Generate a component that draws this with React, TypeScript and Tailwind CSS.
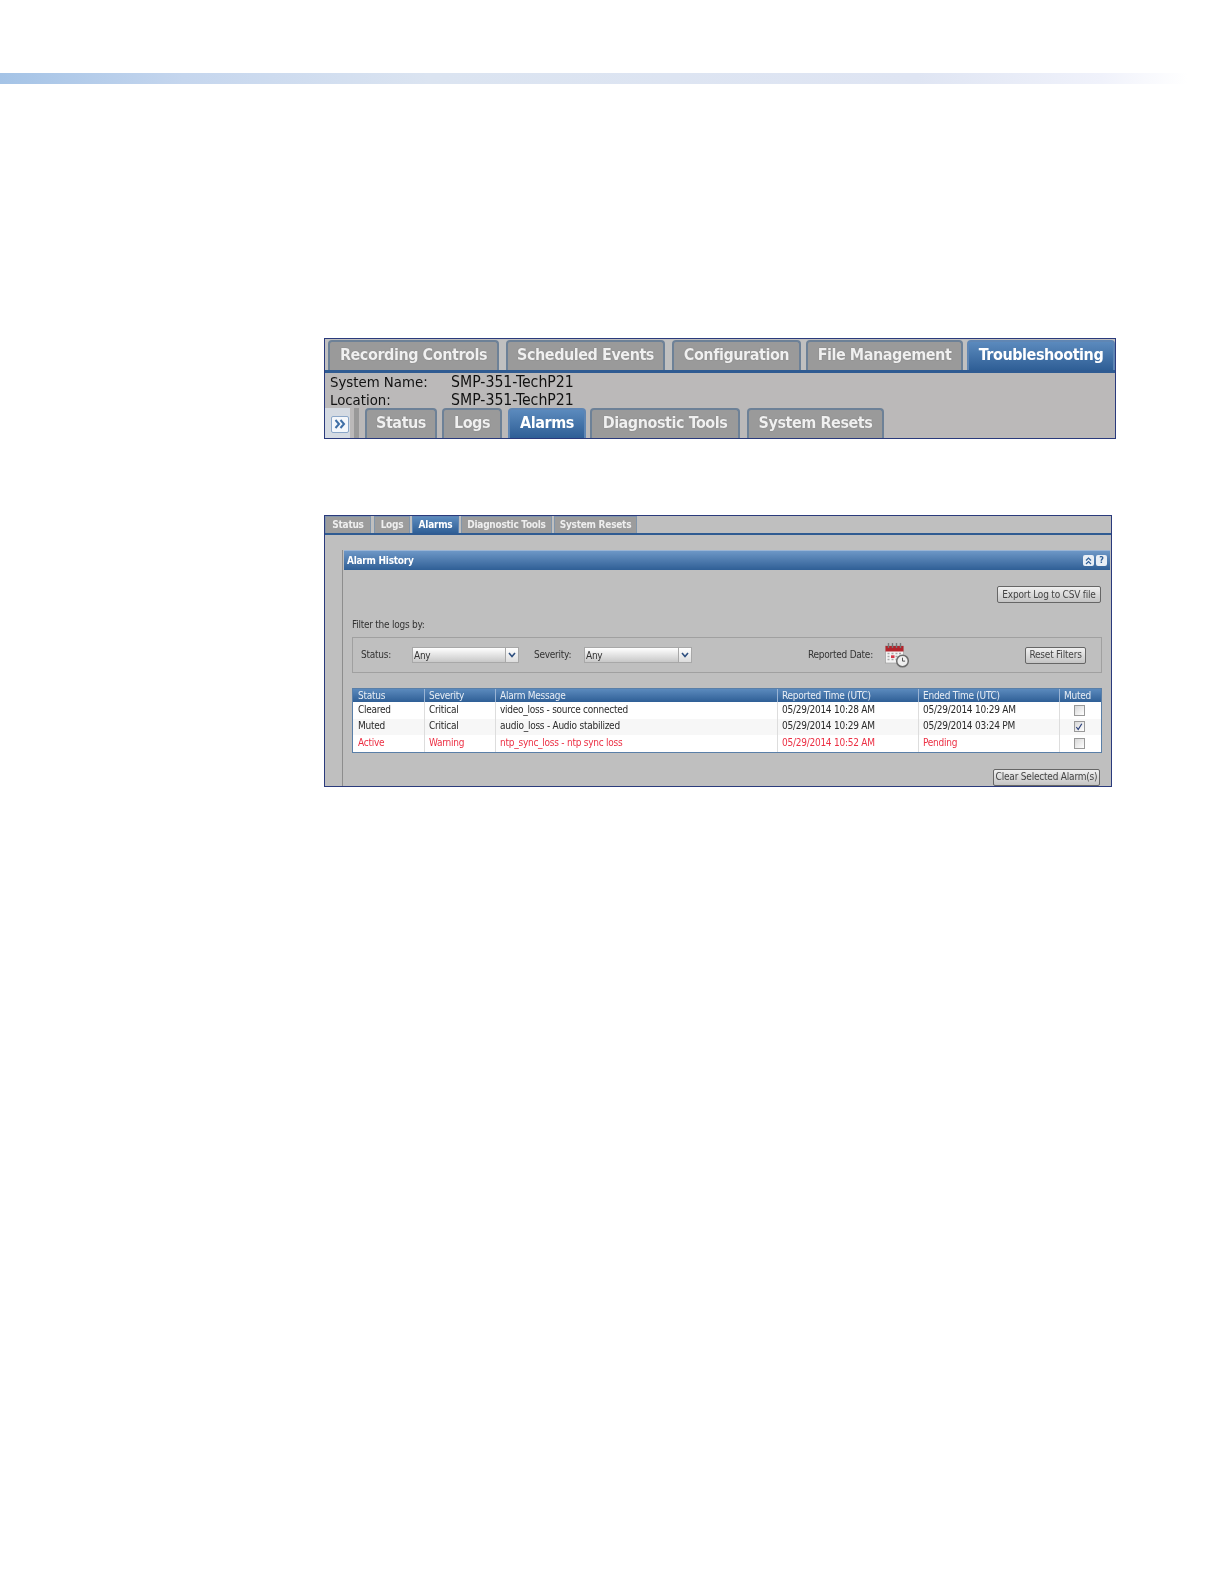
import React from "react";

const font = { fontFamily: '"DejaVu Sans", Tahoma, sans-serif', fontStretch: "condensed" } as const;

function TopTab({ label, w, active, ml }: { label: string; w: string; active?: boolean; ml: string }) {
  return (
    <div
      className={`${w} ${ml} h-[30px] pb-[2px] shrink-0 flex items-center justify-center rounded-t-[4px] border-2 border-b-0 text-[16px] tracking-[-0.45px] font-bold leading-none whitespace-nowrap ${
        active
          ? "border-[#5f86b4] bg-gradient-to-b from-[#5b8abd] to-[#2f5f96] text-white"
          : "border-[#6d8197] bg-[#9a9a9a] text-[#f0f0f0] [text-shadow:0_0_1px_#666666]"
      }`}
    >
      {label}
    </div>
  );
}

function SmallTab({ label, w, active, ml }: { label: string; w: string; active?: boolean; ml: string }) {
  return (
    <div
      className={`${w} ${ml} h-[17px] shrink-0 flex items-center justify-center border border-b-0 text-[10px] tracking-[-0.25px] font-bold leading-none whitespace-nowrap ${
        active
          ? "border-[#5f86b4] bg-gradient-to-b from-[#5b8abd] to-[#2f5f96] text-white"
          : "border-[#8195aa] bg-[#9c9c9c] text-[#eeeeee]"
      }`}
    >
      {label}
    </div>
  );
}

function Btn({ label, w }: { label: string; w: string }) {
  return (
    <div
      className={`${w} h-[17px] shrink-0 flex items-center justify-center rounded-[2px] border border-[#666666] bg-gradient-to-b from-[#f0f0f0] to-[#c4c4c4] text-[10px] tracking-[-0.2px] text-[#444444] leading-none whitespace-nowrap`}
    >
      {label}
    </div>
  );
}

function Select({ w }: { w: string }) {
  return (
    <div className={`${w} h-[16px] shrink-0 flex border border-[#a8a8a8] bg-gradient-to-b from-[#ffffff] to-[#c8c8c8] text-[10px] tracking-[-0.25px] text-[#333333] leading-none`}>
      <div className="flex-1 flex items-center pl-[1px] pt-[1px]">Any</div>
      <div className="w-[13px] flex items-center justify-center border-l border-[#a8a8a8] bg-gradient-to-b from-[#ffffff] to-[#dddddd]">
        <svg width="8" height="6" viewBox="0 0 8 6">
          <path d="M1 1 L4 4.5 L7 1" fill="none" stroke="#2f5080" strokeWidth="1.6" />
        </svg>
      </div>
    </div>
  );
}

function Calendar() {
  return (
    <svg width="24" height="26" viewBox="0 0 24 26" className="shrink-0">
      <rect x="0.5" y="4" width="18" height="17" fill="#f4f4f4" stroke="#a0a0a0" strokeWidth="0.7" />
      <rect x="0.5" y="4" width="18" height="5.5" fill="#b3242c" />
      <path d="M3.5 1v5M7.5 1v5M11.5 1v5M15.5 1v5" stroke="#777777" strokeWidth="1.4" />
      <path d="M2.5 11.5h2M6.5 11.5h2M10.5 11.5h2M14 11.5h2M2.5 14.5h2M10.5 14.5h2M14 14.5h2M2.5 17.5h2M6.5 17.5h2M10.5 17.5h2" stroke="#a8a8a8" strokeWidth="1.6" />
      <rect x="6" y="13.3" width="3.5" height="2.7" fill="#d8394a" />
      <circle cx="17.5" cy="19" r="5.8" fill="#efefef" stroke="#6d6d6d" strokeWidth="1.5" />
      <path d="M17.5 15.7v3.4h2.6" fill="none" stroke="#555555" strokeWidth="1" />
    </svg>
  );
}

const cols = ["w-[72px] pl-[5px]", "w-[71px] pl-[4px]", "w-[282px] pl-[4px]", "w-[141px] pl-[4px]", "w-[141px] pl-[4px]"];

function Row({ cells, red, shade, check }: { cells: string[]; red?: boolean; shade?: boolean; check: "on" | "off" }) {
  return (
    <div className={`flex h-[16.67px] ${shade ? "bg-[#f7f7f7]" : "bg-white"} ${red ? "text-[#ec3044]" : "text-[#2a2a2a]"}`}>
      {cells.map((c, i) => (
        <div key={i} className={`${cols[i]} shrink-0 flex items-center pb-[1px] border-r border-[#dddddd] text-[10px] tracking-[-0.25px] leading-none`}>
          {c}
        </div>
      ))}
      <div className="flex-1 flex items-center justify-center pr-[3px]">
        <div className="w-[11px] h-[11px] border border-[#999999] bg-gradient-to-br from-[#d8d8d8] to-[#ffffff] flex items-center justify-center">
          {check === "on" && (
            <svg width="8" height="8" viewBox="0 0 8 8">
              <path d="M1.3 4 L3.2 6.5 L6.8 0.8" fill="none" stroke="#2a3f7a" strokeWidth="1.2" />
            </svg>
          )}
        </div>
      </div>
    </div>
  );
}

export default function App() {
  return (
    <div className="w-[1224px] h-[1584px] bg-white overflow-hidden" style={font}>
      <div className="pt-[73px]">
        <div className="h-[11px] w-full bg-[linear-gradient(to_right,#a4c3e6_0%,#c5d6ee_15%,#dbe4f1_35%,#dfe5f3_75%,#f0f2fb_90%,#ffffff_97%)]" />
      </div>

      {/* First figure */}
      <div className="ml-[324px] mt-[254px] w-[792px] h-[101px] border border-[#2a3a7c] bg-[#bbb9b9] overflow-hidden blur-[0.4px]">
        <div className="flex h-[34px] items-end pl-[3px] border-b-[3px] border-[#2f5b92] bg-[#c0c0c0]">
          <TopTab label="Recording Controls" w="w-[171px]" ml="ml-0" />
          <TopTab label="Scheduled Events" w="w-[159px]" ml="ml-[7px]" />
          <TopTab label="Configuration" w="w-[129px]" ml="ml-[7px]" />
          <TopTab label="File Management" w="w-[157px]" ml="ml-[5px]" />
          <TopTab label="Troubleshooting" w="w-[148px]" active ml="ml-[4px]" />
        </div>
        <div className="flex pl-[5px] leading-[18px] text-[#111111]">
          <div className="w-[121px] text-[14.8px]">System Name:</div>
          <div className="text-[15.7px]">SMP-351-TechP21</div>
        </div>
        <div className="flex pl-[5px] leading-[18px] text-[#111111]">
          <div className="w-[121px] text-[14.8px]">Location:</div>
          <div className="text-[15.7px]">SMP-351-TechP21</div>
        </div>
        <div className="flex items-end h-[30px] mt-[-1px]">
          <div className="w-[25px] h-[30px] flex items-center pl-[6px] bg-[#d4dae2]">
            <div className="w-[18px] h-[17px] mt-[2px] rounded-[2px] border border-[#8aa6c8] bg-[#f4f7fb] flex items-center justify-center">
              <svg width="12" height="10" viewBox="0 0 12 10">
                <path d="M1.5 1 L5 5 L1.5 9 M6.5 1 L10 5 L6.5 9" fill="none" stroke="#3f6fa6" strokeWidth="2" />
              </svg>
            </div>
          </div>
          <div className="w-[5px] h-[30px] ml-[4px] bg-[#999999]" />
          <TopTab label="Status" w="w-[72px]" ml="ml-[6px]" />
          <TopTab label="Logs" w="w-[60px]" ml="ml-[5px]" />
          <TopTab label="Alarms" w="w-[78px]" active ml="ml-[6px]" />
          <TopTab label="Diagnostic Tools" w="w-[150px]" ml="ml-[4px]" />
          <TopTab label="System Resets" w="w-[137px]" ml="ml-[7px]" />
        </div>
      </div>

      {/* Second figure */}
      <div className="ml-[324px] mt-[76px] w-[788px] h-[272px] border border-[#2a3a7c] bg-[#bfbfbf] overflow-hidden blur-[0.4px]">
        <div className="flex items-end h-[19px] border-b-[2px] border-[#2f5b92]">
          <SmallTab label="Status" w="w-[46px]" ml="ml-0" />
          <SmallTab label="Logs" w="w-[36px]" ml="ml-[3px]" />
          <SmallTab label="Alarms" w="w-[47px]" active ml="ml-[2px]" />
          <SmallTab label="Diagnostic Tools" w="w-[91px]" ml="ml-[2px]" />
          <SmallTab label="System Resets" w="w-[83px]" ml="ml-[2px]" />
        </div>

        <div className="ml-[17px] mt-[15px] h-[240px] border-l border-[#8d8d8d]">
          <div className="h-[20px] mr-[1px] ml-[1px] flex items-center justify-between bg-gradient-to-b from-[#6d97c6] to-[#2f5f96] border-t border-[#9ab4d4] pl-[3px] pr-[3px]">
            <div className="text-[10px] tracking-[-0.25px] font-bold text-white leading-none">Alarm History</div>
            <div className="flex gap-[2px]">
              <div className="w-[11px] h-[11px] rounded-[2px] bg-[#e8eef5] flex items-center justify-center">
                <svg width="7" height="8" viewBox="0 0 7 8">
                  <path d="M1 3.5 L3.5 1 L6 3.5 M1 7 L3.5 4.5 L6 7" fill="none" stroke="#2f5f96" strokeWidth="1.2" />
                </svg>
              </div>
              <div className="w-[11px] h-[11px] rounded-[2px] bg-[#e8eef5] flex items-center justify-center text-[9px] font-bold text-[#2f5f96] leading-none">?</div>
            </div>
          </div>

          <div className="pl-[9px] pr-[9px]">
            <div className="flex justify-end pt-[16px]">
              <Btn label="Export Log to CSV file" w="w-[104px] mr-[1px]" />
            </div>
            <div className="mt-[16px] text-[10px] tracking-[-0.25px] text-[#333333] leading-[12px]">Filter the logs by:</div>
            <div className="mt-[6px] h-[36px] border border-[#a0a0a0] flex items-center pl-[8px] text-[10px] tracking-[-0.25px] text-[#333333] leading-none">
              <div className="w-[51px] shrink-0">Status:</div>
              <Select w="w-[107px]" />
              <div className="ml-[15px] w-[50px] shrink-0">Severity:</div>
              <Select w="w-[108px]" />
              <div className="ml-[116px] w-[77px] shrink-0">Reported Date:</div>
              <Calendar />
              <div className="ml-[116px]">
                <Btn label="Reset Filters" w="w-[61px]" />
              </div>
            </div>

            <div className="mt-[15px] border border-[#5a7fa8]">
              <div className="flex h-[13px] bg-gradient-to-b from-[#5b8abd] to-[#2f5f96] text-[#e8eef5]">
                {["Status", "Severity", "Alarm Message", "Reported Time (UTC)", "Ended Time (UTC)"].map((c, i) => (
                  <div key={c} className={`${cols[i]} shrink-0 flex items-center border-r border-[#9ab4d4] text-[10px] tracking-[-0.25px] leading-none`}>
                    {c}
                  </div>
                ))}
                <div className="flex-1 flex items-center pl-[4px] text-[10px] tracking-[-0.25px] leading-none">Muted</div>
              </div>
              <Row cells={["Cleared", "Critical", "video_loss - source connected", "05/29/2014 10:28 AM", "05/29/2014 10:29 AM"]} check="off" />
              <Row shade cells={["Muted", "Critical", "audio_loss - Audio stabilized", "05/29/2014 10:29 AM", "05/29/2014 03:24 PM"]} check="on" />
              <Row red cells={["Active", "Warning", "ntp_sync_loss - ntp sync loss", "05/29/2014 10:52 AM", "Pending"]} check="off" />
            </div>

            <div className="flex justify-end mt-[16px] pr-[2px]">
              <Btn label="Clear Selected Alarm(s)" w="w-[107px]" />
            </div>
          </div>
        </div>
      </div>
    </div>
  );
}
